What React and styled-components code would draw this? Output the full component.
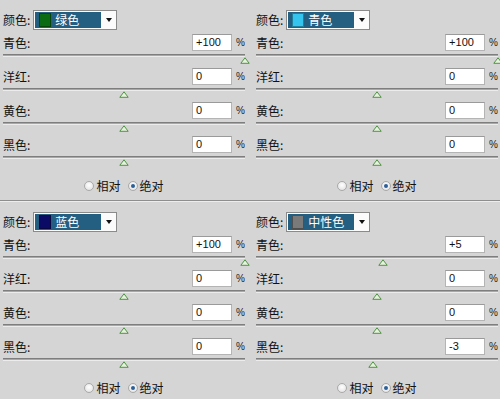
import React from 'react';
import styled, { createGlobalStyle } from 'styled-components';

const Global = createGlobalStyle`
  html, body { margin: 0; padding: 0; background: #d5d5d5; }
  body { font-family: "Noto Sans CJK SC", "Liberation Sans", sans-serif; }
`;

const Screen = styled.div`
  width: 500px;
  height: 399px;
  overflow: hidden;
  background: #d5d5d5;
  display: grid;
  grid-template-columns: 253px 253px;
  grid-template-rows: 200px 2px 197px;
`;

const Separator = styled.div`
  grid-column: 1 / -1;
  border-top: 1px solid #8e8e8e;
  border-bottom: 1px solid #ededed;
  box-sizing: border-box;
`;

const Panel = styled.div`
  padding: 10px 0 0 3px;
  overflow: hidden;
  width: 253px;
  box-sizing: border-box;
`;

const Content = styled.div`
  width: 242px;
  display: flex;
  flex-direction: column;
`;

const Header = styled.div`
  display: flex;
  align-items: center;
  height: 20px;
`;

const Label = styled.span`
  font-size: 12px;
  line-height: 14px;
  color: #111;
  white-space: nowrap;
  flex: ${p => (p.$grow ? 1 : 'none')};
`;

const Dropdown = styled.div`
  margin-left: 3px;
  width: 84px;
  height: 20px;
  box-sizing: border-box;
  border: 1px solid #8a8a8a;
  background: #fbfbfb;
  display: flex;
  padding: 1px;
`;

const DropFill = styled.div`
  width: 66px;
  background: #245e80;
  display: flex;
  align-items: center;
  padding-left: 4px;
  box-sizing: border-box;
  gap: 4px;
`;

const Swatch = styled.div`
  width: 12px;
  height: 14px;
  background: ${p => p.$color};
  border: 1px solid rgba(0,0,0,0.35);
  box-sizing: border-box;
`;

const DropText = styled.span`
  color: #fff;
  font-size: 12px;
  line-height: 14px;
  white-space: nowrap;
`;

const Arrow = styled.div`
  flex: 1;
  display: flex;
  align-items: center;
  justify-content: center;
  &::after {
    content: '';
    border-left: 3px solid transparent;
    border-right: 3px solid transparent;
    border-top: 4px solid #111;
    margin-left: 1px;
  }
`;

const Rows = styled.div`
  margin-top: 4px;
  display: flex;
  flex-direction: column;
`;

const Row = styled.div`
  height: 34px;
  display: flex;
  flex-direction: column;
`;

const RowTop = styled.div`
  display: flex;
  align-items: center;
  height: 17px;
`;

const Input = styled.div`
  width: 40px;
  height: 17px;
  box-sizing: border-box;
  background: #fff;
  border: 1px solid #b4b4b4;
  border-top-color: #9a9a9a;
  font-family: "Liberation Sans", Arial, sans-serif;
  font-size: 11px;
  line-height: 15px;
  padding-left: 3px;
  color: #111;
`;

const Percent = styled.span`
  margin-left: 4px;
  font-family: "Liberation Sans", Arial, sans-serif;
  font-size: 10px;
  color: #222;
`;

const Track = styled.div`
  position: relative;
  margin-top: 3px;
  height: 3px;
  border-top: 1px solid #7e7e7e;
  border-bottom: 1px solid #ececec;
  background: #a8a8a8;
  box-sizing: border-box;
`;

const Thumb = styled.svg`
  position: absolute;
  top: 2px;
  margin-left: -5px;
`;

const RadioRow = styled.div`
  margin-top: 7px;
  display: flex;
  justify-content: center;
  align-items: center;
  gap: 7px;
`;

const RadioItem = styled.label`
  display: flex;
  align-items: center;
  gap: 2px;
  font-size: 12px;
  color: #111;
`;

const RadioCircle = styled.span`
  width: 10px;
  height: 10px;
  border-radius: 50%;
  box-sizing: border-box;
  border: 1px solid #a9a9a9;
  background: radial-gradient(circle at 50% 40%, #ffffff 0%, #e4e4e4 80%);
  display: flex;
  align-items: center;
  justify-content: center;
  &::after {
    content: '';
    width: 4px;
    height: 4px;
    border-radius: 50%;
    background: ${p => (p.$checked ? '#2b5f99' : 'transparent')};
  }
`;

const sliders = ['青色:', '洋红:', '黄色:', '黑色:'];

const panels = [
  { name: '绿色', swatch: '#0b6b12', values: [100, 0, 0, 0] },
  { name: '青色', swatch: '#35c4ee', values: [100, 0, 0, 0] },
  { name: '蓝色', swatch: '#0b0b66', values: [100, 0, 0, 0] },
  { name: '中性色', swatch: '#7a7a7a', values: [5, 0, 0, -3] },
];

const fmt = v => (v > 0 ? `+${v}` : `${v}`);

function ColorPanel({ name, swatch, values }) {
  return (
    <Panel>
      <Content>
        <Header>
          <Label>颜色:</Label>
          <Dropdown>
            <DropFill>
              <Swatch $color={swatch} />
              <DropText>{name}</DropText>
            </DropFill>
            <Arrow />
          </Dropdown>
        </Header>
        <Rows>
          {sliders.map((s, i) => (
            <Row key={s}>
              <RowTop>
                <Label $grow>{s}</Label>
                <Input>{fmt(values[i])}</Input>
                <Percent>%</Percent>
              </RowTop>
              <Track>
                <Thumb
                  width="10"
                  height="7"
                  viewBox="0 0 10 7"
                  style={{ left: `${50 + values[i] / 2}%` }}
                >
                  <path d="M5 0.8 L9.2 6.3 L0.8 6.3 Z" fill="#e6f1df" stroke="#4f9444" strokeWidth="1" strokeLinejoin="round" />
                </Thumb>
              </Track>
            </Row>
          ))}
        </Rows>
        <RadioRow>
          <RadioItem>
            <RadioCircle />
            相对
          </RadioItem>
          <RadioItem>
            <RadioCircle $checked />
            绝对
          </RadioItem>
        </RadioRow>
      </Content>
    </Panel>
  );
}

export default function App() {
  return (
    <>
      <Global />
      <Screen>
        <ColorPanel {...panels[0]} />
        <ColorPanel {...panels[1]} />
        <Separator />
        <ColorPanel {...panels[2]} />
        <ColorPanel {...panels[3]} />
      </Screen>
    </>
  );
}
